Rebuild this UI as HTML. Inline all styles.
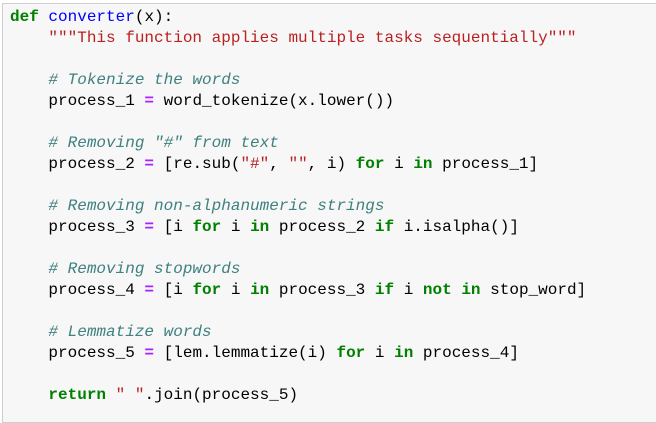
<!DOCTYPE html>
<html><head><style>
html,body{margin:0;padding:0;background:#fff;}
.cell{position:absolute;left:2px;top:3px;width:660px;height:420px;background:#f7f7f7;border:1px solid #cfcfcf;box-sizing:border-box;}
pre{position:absolute;left:7px;top:3px;margin:0;font-family:"Liberation Mono",monospace;font-size:16px;line-height:21px;color:#000;}
.k{color:#008000;font-weight:bold}
.f{color:#0000ff}
.s{color:#ba2121}
.c{color:#408080;font-style:italic}
.o{color:#aa22ff;font-weight:bold}
</style></head><body>
<div class="cell"><pre><span class="k">def</span> <span class="f">converter</span>(x):
    <span class="s">"""This function applies multiple tasks sequentially"""</span>

    <span class="c"># Tokenize the words</span>
    process_1 <span class="o">=</span> word_tokenize(x.lower())

    <span class="c"># Removing "#" from text</span>
    process_2 <span class="o">=</span> [re.sub(<span class="s">"#"</span>, <span class="s">""</span>, i) <span class="k">for</span> i <span class="k">in</span> process_1]

    <span class="c"># Removing non-alphanumeric strings</span>
    process_3 <span class="o">=</span> [i <span class="k">for</span> i <span class="k">in</span> process_2 <span class="k">if</span> i.isalpha()]

    <span class="c"># Removing stopwords</span>
    process_4 <span class="o">=</span> [i <span class="k">for</span> i <span class="k">in</span> process_3 <span class="k">if</span> i <span class="k">not</span> <span class="k">in</span> stop_word]

    <span class="c"># Lemmatize words</span>
    process_5 <span class="o">=</span> [lem.lemmatize(i) <span class="k">for</span> i <span class="k">in</span> process_4]

    <span class="k">return</span> <span class="s">" "</span>.join(process_5)</pre></div>
</body></html>
